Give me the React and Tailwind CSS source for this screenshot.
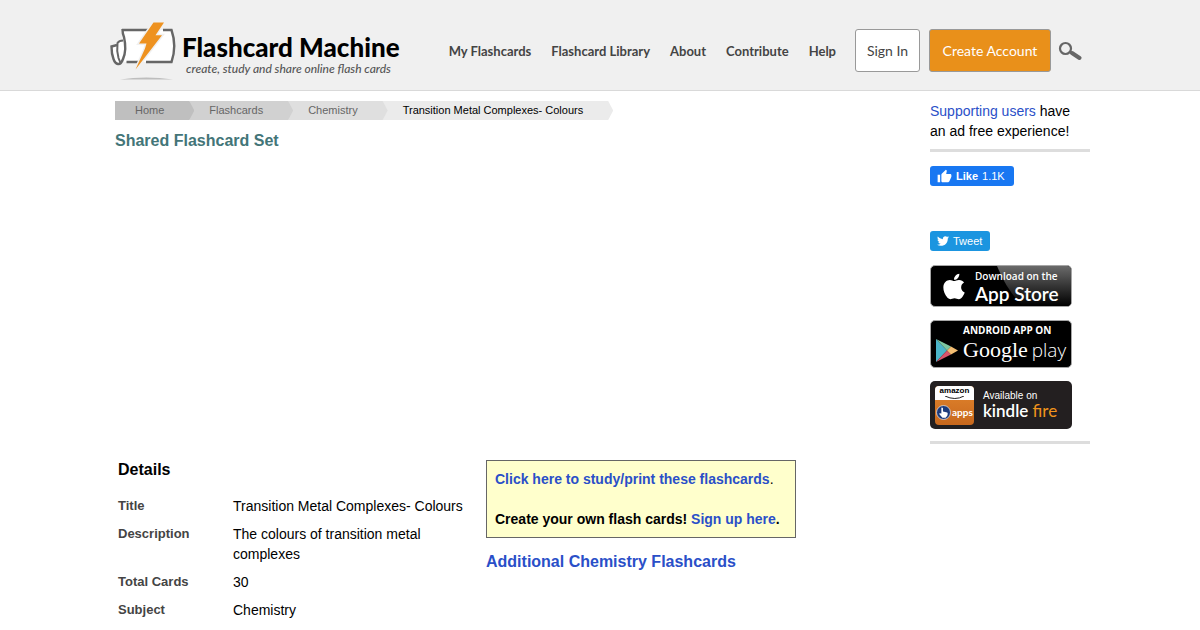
import React from "react";
import { FaApple, FaTwitter } from "react-icons/fa";
import { MdThumbUp } from "react-icons/md";

const navLinks = ["My Flashcards", "Flashcard Library", "About", "Contribute", "Help"];

const crumbs = [
    { label: "Home", style: "z-40 bg-[#bfbfbf] text-[#666]" },
    { label: "Flashcards", style: "z-30 bg-[#d1d1d1] text-[#666]" },
    { label: "Chemistry", style: "z-20 bg-[#dfdfdf] text-[#666]" },
    { label: "Transition Metal Complexes- Colours", style: "z-10 bg-[#ebebeb] text-black" },
];

const details = [
    { name: "Title", value: "Transition Metal Complexes- Colours" },
    { name: "Description", value: "The colours of transition metal complexes" },
    { name: "Total Cards", value: "30" },
    { name: "Subject", value: "Chemistry" },
];

const Logo = () => (
    <a href="#" className="flex">
        <svg width="72" height="62" viewBox="0 0 72 62" aria-hidden="true">
            <path d="M10 58.500 Q36 54.500 63 58.500 Z" fill="#bdbdbd" />
            <path d="M12.500 9 H62 Q67 25 62 41 H14 Q17 30 12.500 9 Z" fill="#fff" />
            <path d="M1.500 25 L12 19 L15 30 L10 43 Q5 42 3.500 38 Z" fill="#fff" />
            <path d="M12 9 H39 M53 9 H61.500 Q67 25 61.500 41 H36 M28 41 H16.500" fill="none" stroke="#666" strokeWidth="2.400" />
            <path d="M12.500 8 Q12.500 13 14 16 Q17 29 13 38 Q11 43.500 8 43 Q5 42.500 3.500 38 Q1.500 33 1.500 25.500 L7 24" fill="none" stroke="#666" strokeWidth="2.400" />
            <path d="M13 19.500 Q9 19.500 7.500 22 Q6.500 30 8.500 37 L10.500 42" fill="none" stroke="#666" strokeWidth="2" />
            <path d="M43.500 1.500 H54 L45.500 14.200 H52 L25.500 48.500 L35 27.500 L36.500 22.500 H29 Z" fill="#f0f0f0" stroke="#f0f0f0" strokeWidth="3" />
            <path d="M43.500 1.500 H54 L45.500 14.200 H52 L25.500 48.500 L35 27.500 L36.500 22.500 H29 Z" fill="#ee9220" />
        </svg>
        <span className="flex flex-col pt-3 font-['Lato']">
            <span className="text-[26px] leading-7 font-black text-black">Flashcard Machine</span>
            <span className="pl-1 text-[12px] leading-4 font-medium text-[#555] italic">create, study and share online flash cards</span>
        </span>
    </a>
);

const SearchIcon = () => (
    <svg width="24" height="20" viewBox="0 0 24 20" aria-hidden="true">
        <circle cx="7.500" cy="7.500" r="5.500" fill="none" stroke="#666" strokeWidth="2.200" />
        <path d="M11.500 10.500 L14 12" stroke="#666" strokeWidth="2.500" />
        <path d="M14 12 L21.500 17" stroke="#666" strokeWidth="4" strokeLinecap="round" />
    </svg>
);

const Header = () => (
    <header className="border-b border-[#d9d9d9] bg-[#f0f0f0]">
        <div className="mx-auto flex h-[90px] max-w-[980px] justify-between">
            <div className="pt-[21px]">
                <Logo />
            </div>
            <div className="flex items-start pt-[29px] pr-2 font-['Lato']">
                <nav className="mr-[19px] flex h-[45px] items-center gap-5 text-[13px] font-bold text-[#444]">
                    {navLinks.map((link) => (
                        <a key={link} href="#">{link}</a>
                    ))}
                </nav>
                <button className="mr-[9px] h-[43px] w-[65px] rounded-[3px] border border-[#999] bg-white text-[14px] text-[#444]">
                    Sign In
                </button>
                <button className="mr-[7px] h-[43px] w-[122px] rounded-[3px] border border-[#999] bg-[#e9901a] text-[14px] text-white">
                    Create Account
                </button>
                <button aria-label="Search" className="flex h-[43px] items-center">
                    <SearchIcon />
                </button>
            </div>
        </div>
    </header>
);

const Breadcrumbs = () => (
    <nav className="flex">
        {crumbs.map((crumb) => (
            <a
                key={crumb.label}
                href="#"
                className={`relative -mr-[5px] pr-[30px] pl-5 text-[11px] leading-[19px] [clip-path:polygon(0_0,calc(100%-5px)_0,100%_50%,calc(100%-5px)_100%,0_100%)] ${crumb.style}`}
            >
                {crumb.label}
            </a>
        ))}
    </nav>
);

const AppStoreBadge = () => (
    <a href="#" className="relative flex h-[42px] w-[142px] items-center overflow-hidden rounded-[5px] border border-[#a6a6a6] bg-black text-white">
        <svg className="absolute inset-0" width="140" height="40" viewBox="0 0 140 40" aria-hidden="true">
            <defs>
                <linearGradient id="shine" x1="0" y1="0" x2="0" y2="1">
                    <stop offset="0" stopColor="#6a6a6a" />
                    <stop offset="1" stopColor="#000" />
                </linearGradient>
            </defs>
            <path d="M66 0 H140 V40 H92 Q76 25 66 0 Z" fill="url(#shine)" />
        </svg>
        <FaApple className="relative ml-2.5 h-[29px] w-[26px]" />
        <span className="relative ml-2 flex flex-col whitespace-nowrap">
            <span className="pb-px font-['Open_Sans'] text-[10px] leading-[14px] font-semibold">Download on the</span>
            <span className="font-['Lato'] text-[19px] leading-5 font-semibold">App Store</span>
        </span>
    </a>
);

const GooglePlayBadge = () => (
    <a href="#" className="flex h-12 w-[142px] rounded-[5px] border border-[#a6a6a6] bg-black text-white">
        <svg className="mt-[17px] ml-1 shrink-0" width="24" height="25" viewBox="0 0 24 25" aria-hidden="true">
            <path d="M1 1 L12 12.500 L1 24 Z" fill="#4bb5c9" />
            <path d="M1 1 L16 8.500 L12 12.500 Z" fill="#7cc7a0" />
            <path d="M1 24 L16 16.500 L12 12.500 Z" fill="#d8556b" />
            <path d="M16 8.500 L23 12.500 L16 16.500 L12 12.500 Z" fill="#f2bd72" />
        </svg>
        <span className="ml-1 flex flex-col whitespace-nowrap">
            <span className="pt-[3px] font-['Open_Sans'] text-[10px] leading-3 font-bold">ANDROID APP ON</span>
            <span className="flex items-baseline gap-1 leading-7">
                <span className="font-['Liberation_Serif'] text-[22px]">Google</span>
                <span className="font-['Open_Sans'] text-[19px] font-light">play</span>
            </span>
        </span>
    </a>
);

const KindleBadge = () => (
    <a href="#" className="flex h-12 w-[142px] items-center rounded-[5px] bg-[#231f20] text-white">
        <span className="ml-[5px] flex h-[39px] w-[39px] flex-col overflow-hidden rounded-[4px] bg-linear-to-b from-[#e2862e] to-[#c8681d]">
            <span className="flex h-[14px] flex-col items-center bg-white font-['Liberation_Sans'] text-[8px] leading-[10px] font-bold text-black">
                amazon
                <svg width="22" height="4" viewBox="0 0 22 4" aria-hidden="true">
                    <path d="M1 0 Q11 5 20 0" fill="none" stroke="#222" strokeWidth="1" />
                </svg>
            </span>
            <span className="flex flex-1 items-center gap-px pl-px font-['Lato'] text-[10px] font-bold">
                <svg className="shrink-0" width="15" height="15" viewBox="0 0 14 14" aria-hidden="true">
                    <circle cx="7" cy="7" r="6.500" fill="#1d3a7a" stroke="#fff" strokeWidth="0.600" />
                    <path d="M3.500 4 V6 M5 2.500 Q6 2 6.500 3 V6 L10.500 7 Q11.500 8 10.500 10 L9 12 H6 L3 8.500 Q3 7 5 8 Z" fill="#fff" />
                </svg>
                apps
            </span>
        </span>
        <span className="ml-[9px] flex flex-col whitespace-nowrap">
            <span className="font-['Liberation_Sans'] text-[10px] leading-3">Available on</span>
            <span className="font-['Lato'] text-[17px] leading-[18px] font-semibold">
                kindle <span className="font-normal text-[#f0941c]">fire</span>
            </span>
        </span>
    </a>
);

const Sidebar = () => (
    <aside className="w-40 shrink-0 pt-[10px]">
        <p className="border-b-[3px] border-[#ddd] pr-3 pb-2 text-[14px] leading-5">
            <a href="#" className="text-[#2a4fc8]">Supporting users</a> have an ad free experience!
        </p>
        <button className="mt-[14px] flex h-5 w-[84px] items-center rounded-[3px] bg-[#1877f2] pl-[7px] text-[11px] text-white">
            <MdThumbUp className="mr-1 size-[15px]" />
            <span className="mr-1 font-bold">Like</span>
            1.1K
        </button>
        <button className="mt-[45px] flex h-5 w-[60px] items-center gap-1 rounded-[3px] bg-[#1b95e0] pl-[7px] text-[11px] text-white">
            <FaTwitter className="size-[12px]" />
            Tweet
        </button>
        <div className="mt-[14px] flex flex-col gap-[13px] border-b-[3px] border-[#ddd] pb-3">
            <AppStoreBadge />
            <GooglePlayBadge />
            <KindleBadge />
        </div>
    </aside>
);

const Details = () => (
    <section className="w-[371px] shrink-0 px-[3px]">
        <h2 className="mb-[13px] text-[16px] leading-5 font-bold">Details</h2>
        <table className="w-full text-left">
            <tbody>
                {details.map((row) => (
                    <tr key={row.name} className="align-top leading-5">
                        <th scope="row" className="w-[115px] pt-[3px] pb-[5px] text-[13px] font-bold text-[#444]">{row.name}</th>
                        <td className="pt-[3px] pb-[5px] text-[14px]">{row.value}</td>
                    </tr>
                ))}
            </tbody>
        </table>
    </section>
);

const App = () => {
    return (
        <div className="bg-white font-['Liberation_Sans',Arial,sans-serif] text-black">
            <Header />
            <div className="mx-auto flex max-w-[980px]">
                <main className="flex-1 pt-[10px] pl-[5px]">
                    <Breadcrumbs />
                    <h1 className="mt-[11px] text-[16px] leading-5 font-bold text-[#437578]">Shared Flashcard Set</h1>
                    {/* space for the ad */}
                    <div className="h-[309px]" />
                    <div className="flex items-start">
                        <Details />
                        <section>
                            <div className="w-[310px] border border-[#666] bg-[#ffc] p-2 text-[14px] leading-5">
                                <p className="mb-5">
                                    <a href="#" className="font-bold text-[#2a4fc8]">Click here to study/print these flashcards</a>.
                                </p>
                                <p className="font-bold">
                                    Create your own flash cards! <a href="#" className="text-[#2a4fc8]">Sign up here</a>.
                                </p>
                            </div>
                            <h2 className="mt-[14px] text-[16px] leading-5 font-bold">
                                <a href="#" className="text-[#2a4fc8]">Additional Chemistry Flashcards</a>
                            </h2>
                        </section>
                    </div>
                </main>
                <Sidebar />
            </div>
        </div>
    );
};

export default App;
